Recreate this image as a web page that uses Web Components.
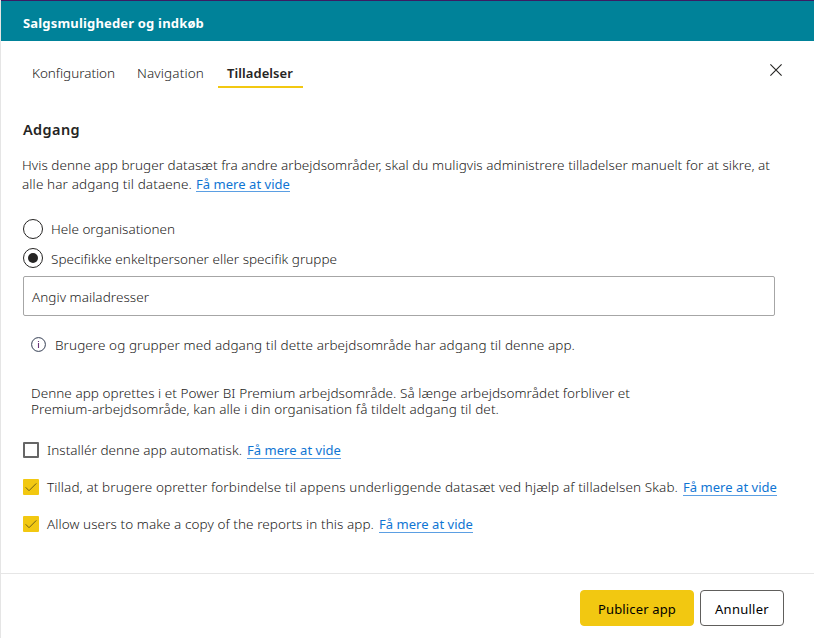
<!DOCTYPE html>
<html lang="da">
<head>
<meta charset="utf-8">
<title>Salgsmuligheder og indkøb</title>
<style>
html,body{margin:0;padding:0}
body{width:814px;height:638px;overflow:hidden;background:#fff;color:#1c1b1a;font:300 13.5px/20px "Noto Sans","Open Sans",sans-serif}
</style>
</head>
<body>
<app-panel></app-panel>
<script>
const define = (name, html, setup) => customElements.define(name, class extends HTMLElement {
  connectedCallback() {
    if (this.shadowRoot) return;
    this.attachShadow({ mode: 'open' }).innerHTML = html;
    if (setup) setup(this, this.shadowRoot);
  }
});

// One line of text, tracked so that it fills the width given by "w".
define('text-line', `<style>
  :host{display:block;flex:none;white-space:nowrap}
  span{display:inline-block;vertical-align:top}
</style><span><slot></slot></span>`, (el, root) => {
  const w = +el.getAttribute('w'), span = root.querySelector('span');
  el.style.width = w + 'px';
  const n = el.textContent.length;
  span.style.letterSpacing = ((w - span.getBoundingClientRect().width) / n).toFixed(4) + 'px';
});

define('more-link', `<style>
  :host{display:block;flex:none;height:18px;border-bottom:1px solid #5b9fe3;color:#0f75d3;font-weight:400;font-size:13px;cursor:pointer}
</style><text-line w="94">Få mere at vide</text-line>`);

define('app-header', `<style>
  :host{display:block;height:28px;padding:12px 0 0 22px;background:#008299;color:#fff;font-weight:700;font-size:13px;border-top:1px solid #3b1c63}
</style><text-line w="181">Salgsmuligheder og indkøb</text-line>`);

define('tab-item', `<style>
  :host{display:block;height:23px;padding:0 10px 0 9px;border-bottom:2px solid transparent}
  :host([selected]){border-color:#f2c811;font-weight:600;font-size:13px;color:#252423}
</style><slot></slot>`);

define('tab-bar', `<style>
  :host{display:flex;align-items:flex-start;padding:22px 32px 0 22px;height:25px}
  nav{display:flex;gap:3px;flex:1}
  tab-item[selected]{margin-left:1px}
  svg{display:block;margin-top:1px}
</style><nav>
  <tab-item><text-line w="83">Konfiguration</text-line></tab-item>
  <tab-item><text-line w="67">Navigation</text-line></tab-item>
  <tab-item selected><text-line w="66">Tilladelser</text-line></tab-item>
</nav><svg width="12" height="12" viewBox="0 0 12 12"><path d="M.4.4 11.6 11.6M11.6.4.4 11.6" stroke="#252423" stroke-width="1.1" fill="none"/></svg>`);

define('radio-option', `<style>
  :host{display:flex;gap:8px;height:20px}
  i{box-sizing:border-box;width:20px;height:20px;border:1px solid #252423;border-radius:50%;display:grid;place-items:center;flex:none}
  :host([checked]) i::after{content:"";width:10px;height:10px;border-radius:50%;background:#252423}
  :host([checked]) slot{display:block;padding-top:1px}
</style><i></i><slot></slot>`);

define('mail-field', `<style>
  :host{display:block;box-sizing:border-box;width:752px;height:40px;border:1px solid #a6a6a6;border-radius:2px;padding:10px 8px}
</style><slot></slot>`);

define('check-option', `<style>
  :host{display:flex;height:20px}
  i{box-sizing:border-box;width:16px;height:16px;margin:2px 8px 0 0;border:2px solid #666;border-radius:1px;flex:none}
  svg{display:none}
  :host([checked]) i{background:#f2c811;border:0}
  :host([checked]) svg{display:block}
</style><i><svg width="16" height="16" viewBox="0 0 16 16"><path d="M2.7 8.3 6 11.7 13.3 4.4" fill="none" stroke="#6e5f17" stroke-width="1"/></svg></i><slot></slot>`);

define('info-note', `<style>
  :host{display:flex;height:20px;padding-left:8px}
  svg{display:block;margin:1px 9px 0 0;flex:none}
</style><svg width="15" height="16" viewBox="0 0 15 16"><circle cx="7.5" cy="8.5" r="6.9" fill="none" stroke="#333d52" stroke-width="1"/><path d="M7.5 7v5M7.5 5v1" stroke="#6a3478" stroke-width="1.1"/></svg><slot></slot>`);

define('app-button', `<style>
  :host{box-sizing:border-box;display:flex;justify-content:center;height:36px;padding-top:8px;border-radius:4px;border:1px solid #605e5c;width:84px;color:#000;font-weight:400;font-size:13px}
  :host([primary]){width:114px;background:#f2c811;border-color:#f2c811}
</style><slot></slot>`);

define('app-footer', `<style>
  :host{display:flex;gap:6px;justify-content:flex-end;border-top:1px solid #e6e6e6;padding:16px 30px 12px 0}
</style><app-button primary><text-line w="78">Publicer app</text-line></app-button><app-button><text-line w="54">Annuller</text-line></app-button>`);

define('app-panel', `<style>
  :host{display:flex;flex-direction:column;box-sizing:border-box;width:814px;height:638px;border-left:1px solid #e5e5e5;background:#fff}
  main{flex:1;padding:31px 0 0 22px}
  .title{font-weight:600;font-size:14.5px;color:#252423}
  .intro{margin:16px 0 0 -1px}
  .intro text-line{height:19px}
  .row{display:flex;gap:4px}
  .intro more-link{height:17px}
  .radios{display:grid;gap:9px;margin:26px 0 8px}
  info-note{margin-top:19px}
  .premium{margin:30px 0 0 8px;line-height:16px}
  .checks{display:grid;gap:17px;margin-top:23px}
  more-link{margin-left:5px}
  .intro more-link{margin-left:0}
</style>
<app-header></app-header>
<tab-bar></tab-bar>
<main>
  <text-line class="title" w="57">Adgang</text-line>
  <div class="intro">
    <text-line w="748">Hvis denne app bruger datasæt fra andre arbejdsområder, skal du muligvis administrere tilladelser manuelt for at sikre, at</text-line>
    <div class="row"><text-line w="170">alle har adgang til dataene.</text-line><more-link></more-link></div>
  </div>
  <div class="radios">
    <radio-option><text-line w="124">Hele organisationen</text-line></radio-option>
    <radio-option checked><text-line w="286">Specifikke enkeltpersoner eller specifik gruppe</text-line></radio-option>
  </div>
  <mail-field><text-line w="117">Angiv mailadresser</text-line></mail-field>
  <info-note><text-line w="520">Brugere og grupper med adgang til dette arbejdsområde har adgang til denne app.</text-line></info-note>
  <div class="premium">
    <text-line w="599">Denne app oprettes i et Power BI Premium arbejdsområde. Så længe arbejdsområdet forbliver et</text-line>
    <text-line w="468">Premium-arbejdsområde, kan alle i din organisation få tildelt adgang til det.</text-line>
  </div>
  <div class="checks">
    <check-option><text-line w="195">Installér denne app automatisk.</text-line><more-link></more-link></check-option>
    <check-option checked><text-line w="631">Tillad, at brugere opretter forbindelse til appens underliggende datasæt ved hjælp af tilladelsen Skab.</text-line><more-link></more-link></check-option>
    <check-option checked><text-line w="327">Allow users to make a copy of the reports in this app.</text-line><more-link></more-link></check-option>
  </div>
</main>
<app-footer></app-footer>`);
</script>
</body>
</html>
